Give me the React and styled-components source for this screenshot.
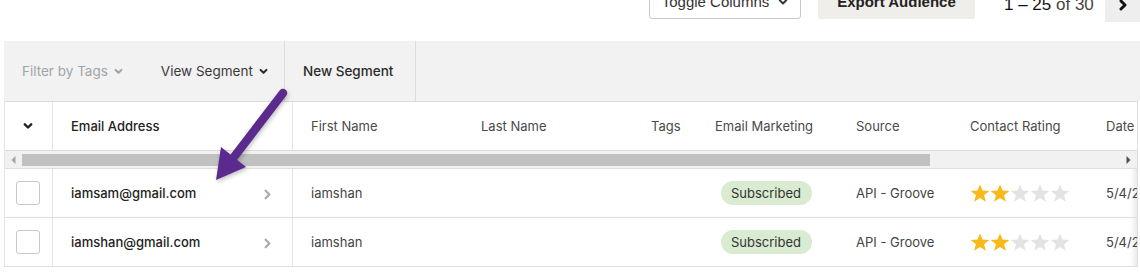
import React from "react";
import styled, { createGlobalStyle } from "styled-components";

const GlobalStyle = createGlobalStyle`
  html, body {
    margin: 0;
    background: #fff;
  }
  body {
    font-family: Inter, "Noto Sans", sans-serif;
    -webkit-font-smoothing: antialiased;
  }
  * {
    box-sizing: border-box;
  }
`;

const columns = ["First Name", "Last Name", "Tags", "Email Marketing", "Source", "Contact Rating", "Date"];
const gridCols = "48px 240px 170px 170px 64px 141px 114px 136px 1fr";

const contacts = [
  { email: "iamsam@gmail.com", first: "iamshan", status: "Subscribed", source: "API - Groove", rating: 2, date: "5/4/2021" },
  { email: "iamshan@gmail.com", first: "iamshan", status: "Subscribed", source: "API - Groove", rating: 2, date: "5/4/2021" },
];

function ChevronDown({ size = 9, color = "currentColor", weight = 2.4 }) {
  return (
    <svg width={size} height={size} viewBox="0 0 10 10">
      <path d="M1.8 3.3 L5 6.5 L8.2 3.3" fill="none" stroke={color} strokeWidth={weight} strokeLinecap="round" strokeLinejoin="round" />
    </svg>
  );
}

function ChevronRight({ size = 10, color = "currentColor", weight = 2 }) {
  return (
    <svg width={size} height={size} viewBox="0 0 10 10">
      <path d="M3.3 1.6 L6.7 5 L3.3 8.4" fill="none" stroke={color} strokeWidth={weight} strokeLinecap="round" strokeLinejoin="round" />
    </svg>
  );
}

function Star({ filled }) {
  return (
    <svg width="20" height="19" viewBox="0 0 24 23">
      <polygon
        points="12,0.5 15.1,8 23.3,8.4 16.9,13.6 19.1,21.6 12,17 4.9,21.6 7.1,13.6 0.7,8.4 8.9,8"
        fill={filled ? "#f8b91a" : "#e3e3e3"}
      />
    </svg>
  );
}

function Rating({ value }) {
  return (
    <Stars>
      {[0, 1, 2, 3, 4].map((i) => (
        <Star key={i} filled={i < value} />
      ))}
    </Stars>
  );
}

function PointerArrow() {
  return (
    <ArrowLayer width="1140" height="272" viewBox="0 0 1140 272">
      <line x1="283" y1="93" x2="234" y2="157" stroke="#5b2a8e" strokeWidth="8.5" strokeLinecap="round" />
      <polygon points="216,180 221,147 246,167" fill="#5b2a8e" />
    </ArrowLayer>
  );
}

export default function App() {
  return (
    <Page>
      <GlobalStyle />
      <TopBar>
        <ToggleButton>
          Toggle Columns <ChevronDown size={10} color="#333" weight={2} />
        </ToggleButton>
        <ExportButton>Export Audience</ExportButton>
        <Pager>
          <b>1 – 25</b> of 30
        </Pager>
        <NextButton>
          <ChevronRight size={12} color="#111" weight={2.4} />
        </NextButton>
      </TopBar>

      <FilterBar>
        <FilterGroup>
          <FilterItem $muted>
            Filter by Tags <ChevronDown color="#a3a7ab" />
          </FilterItem>
          <FilterItem>
            View Segment <ChevronDown color="#333" />
          </FilterItem>
        </FilterGroup>
        <SegmentButton>New Segment</SegmentButton>
      </FilterBar>

      <Table>
        <HeaderRow>
          <SelectCell>
            <ChevronDown color="#222" size={10} />
          </SelectCell>
          <HeadCell $strong $divider>Email Address</HeadCell>
          {columns.map((c) => (
            <HeadCell key={c}>{c}</HeadCell>
          ))}
        </HeaderRow>

        <ScrollBar>
          <ScrollArrow>
            <svg width="5" height="8" viewBox="0 0 5 8">
              <polygon points="4.5,0 0.5,4 4.5,8" fill="#a3a3a3" />
            </svg>
          </ScrollArrow>
          <ScrollThumb />
          <ScrollTrack />
          <ScrollArrow>
            <svg width="5" height="8" viewBox="0 0 5 8">
              <polygon points="0.5,0 4.5,4 0.5,8" fill="#505050" />
            </svg>
          </ScrollArrow>
        </ScrollBar>

        {contacts.map((c) => (
          <BodyRow key={c.email}>
            <SelectCell>
              <Checkbox />
            </SelectCell>
            <EmailCell>
              {c.email}
              <ChevronRight color="#a9a9a9" size={11} weight={2} />
            </EmailCell>
            <Cell>{c.first}</Cell>
            <Cell />
            <Cell />
            <Cell>
              <Badge>{c.status}</Badge>
            </Cell>
            <Cell>{c.source}</Cell>
            <Cell>
              <Rating value={c.rating} />
            </Cell>
            <Cell>{c.date}</Cell>
          </BodyRow>
        ))}
      </Table>

      <PointerArrow />
    </Page>
  );
}

const Page = styled.div`
  position: relative;
  width: 1140px;
  height: 272px;
  overflow: hidden;
`;

const TopBar = styled.div`
  display: flex;
  align-items: flex-start;
  justify-content: flex-end;
  height: 57px;
  margin-top: -16px;
  font-family: "Liberation Sans", Arial, sans-serif;
  font-size: 15px;
  color: #333;
`;

const ToggleButton = styled.div`
  display: flex;
  align-items: center;
  justify-content: center;
  gap: 9px;
  width: 152px;
  height: 35px;
  border: 1px solid #c8c8c8;
  border-radius: 3px;
  background: #fff;
  color: #333;
`;

const ExportButton = styled.div`
  display: flex;
  align-items: center;
  justify-content: center;
  width: 157px;
  height: 35px;
  margin-left: 17px;
  background: #efeeea;
  border-radius: 2px;
  font-weight: 700;
  color: #222;
`;

const Pager = styled.div`
  width: 89px;
  height: 42px;
  margin-left: 29px;
  display: flex;
  align-items: center;
  font-size: 17px;
  color: #444;
  white-space: pre;

  b {
    font-weight: 400;
    color: #111;
  }
`;

const NextButton = styled.div`
  display: flex;
  align-items: center;
  justify-content: center;
  width: 35px;
  height: 38px;
  margin-left: 12px;
  padding-top: 4px;
  background: #eeeeee;
`;

const FilterBar = styled.div`
  display: flex;
  height: 60px;
  margin-left: 4px;
  background: #f2f2f2;
  font-size: 13.5px;
`;

const FilterGroup = styled.div`
  display: flex;
  align-items: center;
  gap: 38px;
  width: 280px;
  padding-left: 18px;
`;

const FilterItem = styled.div`
  display: flex;
  align-items: center;
  gap: 6px;
  color: ${(p) => (p.$muted ? "#a0a4a8" : "#3a3a3a")};
`;

const SegmentButton = styled.div`
  display: flex;
  align-items: center;
  width: 132px;
  padding-left: 18px;
  border-left: 1px solid #dcdcdc;
  border-right: 1px solid #dcdcdc;
  color: #2b2b2b;
  font-weight: 500;
`;

const Table = styled.div`
  margin-left: 4px;
  width: 1134px;
  border-left: 1px solid #e4e4e4;
  border-right: 1px solid #dedede;
  border-top: 1px solid #dcdcdc;
  font-size: 13px;
  color: #444;
`;

const HeaderRow = styled.div`
  display: grid;
  grid-template-columns: ${gridCols};
  height: 49px;
  border-bottom: 1px solid #dcdcdc;
`;

const BodyRow = styled.div`
  display: grid;
  grid-template-columns: ${gridCols};
  height: 49px;
  border-bottom: 1px solid #e0e0e0;
  box-shadow: inset -7px 0 6px -5px rgba(0, 0, 0, 0.12);
`;

const Cell = styled.div`
  display: flex;
  align-items: center;
  padding-left: 18px;
  white-space: nowrap;
  overflow: hidden;
  color: #444;
`;

const HeadCell = styled(Cell)`
  color: ${(p) => (p.$strong ? "#222" : "#4a4a4a")};
  font-weight: ${(p) => (p.$strong ? 500 : 400)};
  border-right: ${(p) => (p.$divider ? "1px solid #e4e4e4" : "none")};
`;

const SelectCell = styled.div`
  display: flex;
  align-items: center;
  justify-content: center;
  padding-right: 2px;
  border-right: 1px solid #e4e4e4;
`;

const EmailCell = styled(Cell)`
  justify-content: space-between;
  padding-right: 19px;
  color: #222;
  font-weight: 500;
  border-right: 1px solid #e4e4e4;

  svg {
    margin-top: 3px;
  }
`;

const Checkbox = styled.div`
  width: 24px;
  height: 24px;
  border: 1px solid #c8c8c8;
  border-radius: 3px;
  background: #fff;
  margin-left: 1px;
`;

const Badge = styled.span`
  display: inline-flex;
  align-items: center;
  height: 24px;
  margin-left: 6px;
  padding: 0 11px 0 10px;
  border-radius: 12px;
  background: #d9ebd0;
  color: #333;
`;

const Stars = styled.div`
  display: flex;
`;

const ScrollBar = styled.div`
  display: flex;
  align-items: center;
  height: 18px;
  background: #f1f1f1;
  border-bottom: 1px solid #dedede;
`;

const ScrollArrow = styled.div`
  display: flex;
  align-items: center;
  justify-content: center;
  width: 17px;
  height: 100%;
`;

const ScrollThumb = styled.div`
  width: 908px;
  height: 12px;
  background: #c1c1c1;
`;

const ScrollTrack = styled.div`
  flex: 1;
`;

const ArrowLayer = styled.svg`
  position: absolute;
  left: 0;
  top: 0;
  pointer-events: none;
  filter: drop-shadow(1px 2px 2px rgba(0, 0, 0, 0.25));
`;
